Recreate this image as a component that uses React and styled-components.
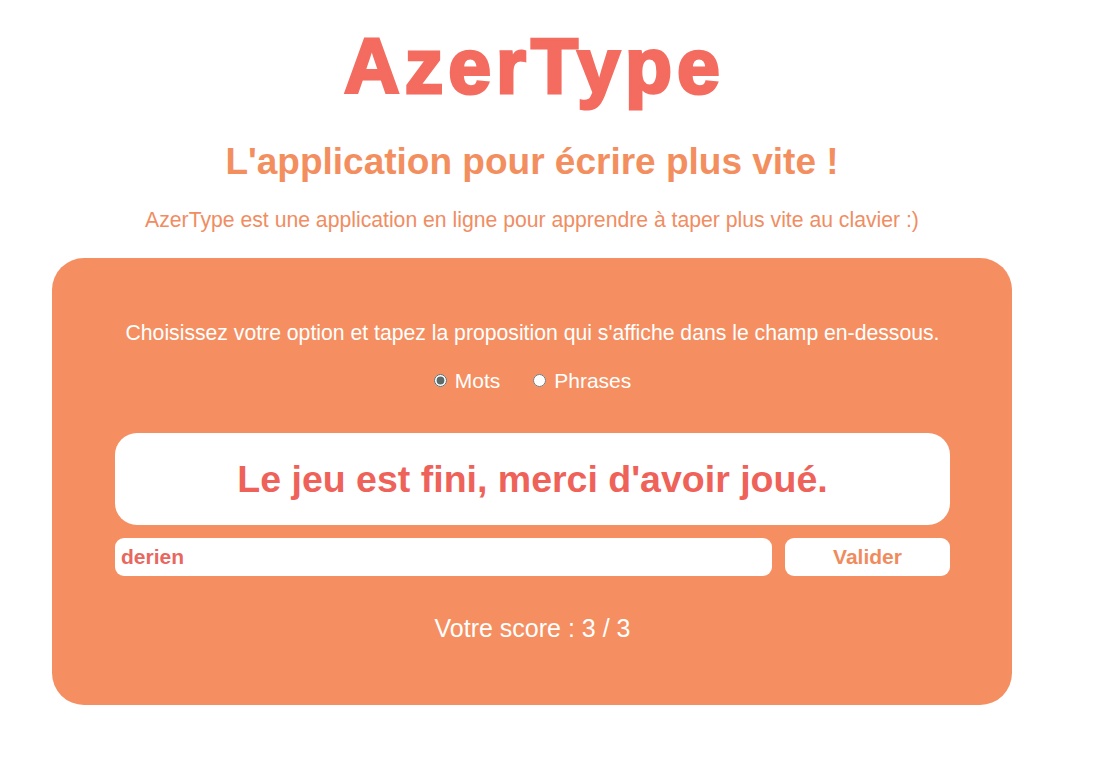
import React, { useState } from 'react';
import styled, { createGlobalStyle } from 'styled-components';

const GlobalStyle = createGlobalStyle`
    body {
        margin: 0;
        background: #fff;
        font-family: "Liberation Sans", Arial, sans-serif;
    }
`;

function App() {
    const [mode, setMode] = useState('mots');
    const [value, setValue] = useState('derien');

    return (
        <PageStyled>
            <GlobalStyle />
            <h1>AzerType</h1>
            <h2>L'application pour écrire plus vite !</h2>
            <p className="intro">AzerType est une application en ligne pour apprendre à taper plus vite au clavier :)</p>
            <Panel>
                <p>Choisissez votre option et tapez la proposition qui s'affiche dans le champ en-dessous.</p>
                <Options>
                    <label>
                        <input type="radio" name="mode" checked={mode === 'mots'} onChange={() => setMode('mots')} />
                        Mots
                    </label>
                    <label>
                        <input type="radio" name="mode" checked={mode === 'phrases'} onChange={() => setMode('phrases')} />
                        Phrases
                    </label>
                </Options>
                <Proposition>Le jeu est fini, merci d'avoir joué.</Proposition>
                <InputRow>
                    <input type="text" value={value} onChange={(e) => setValue(e.target.value)} />
                    <button>Valider</button>
                </InputRow>
                <Score>Votre score : 3 / 3</Score>
            </Panel>
        </PageStyled>
    )
}

const PageStyled = styled.div`
    width: 1064px;
    display: flex;
    flex-direction: column;
    align-items: center;
    padding-top: 28px;
    padding-bottom: 40px;
    h1 {
        margin: 0;
        padding-left: 5px;
        font-size: 77px;
        line-height: 1;
        font-weight: 900;
        color: #f46b5f;
        letter-spacing: 5px;
        -webkit-text-stroke: 3px #f46b5f;
    }
    h2 {
        margin: 36px 0 0;
        font-size: 37px;
        line-height: 1.15;
        color: #f38f5f;
    }
    .intro {
        margin: 23px 0 0;
        font-size: 21.2px;
        line-height: 1.2;
        color: #f08d63;
    }
`;

const Panel = styled.div`
    margin-top: 26px;
    width: 960px;
    box-sizing: border-box;
    background: #f58f61;
    border-radius: 32px;
    padding: 62px 62px 62px 63px;
    display: flex;
    flex-direction: column;
    align-items: center;
    color: #fff;
    p {
        margin: 0;
        font-size: 21.2px;
        line-height: 1.2;
    }
`;

const Options = styled.div`
    margin-top: 23px;
    height: 25px;
    display: flex;
    gap: 33px;
    font-size: 21px;
    label {
        display: flex;
        align-items: center;
        gap: 8px;
    }
    input {
        margin: 0;
        width: 13px;
        height: 13px;
        accent-color: #5d6a6a;
    }
`;

const Proposition = styled.div`
    margin-top: 40px;
    width: 100%;
    height: 92px;
    box-sizing: border-box;
    background: #fff;
    border-radius: 22px;
    display: flex;
    align-items: center;
    justify-content: center;
    font-size: 37.5px;
    font-weight: bold;
    color: #ee625a;
`;

const InputRow = styled.div`
    margin-top: 13px;
    width: 100%;
    display: flex;
    gap: 13px;
    input {
        flex: 1;
        height: 38px;
        box-sizing: border-box;
        border: none;
        outline: none;
        border-radius: 9px;
        padding: 0 6px;
        font-family: inherit;
        font-size: 21px;
        font-weight: bold;
        color: #e8675f;
        background: #fff;
    }
    button {
        width: 165px;
        height: 38px;
        border: none;
        border-radius: 9px;
        background: #fff;
        font-family: inherit;
        font-size: 21px;
        font-weight: bold;
        color: #f08b5e;
        cursor: pointer;
    }
`;

const Score = styled.div`
    margin-top: 37px;
    font-size: 25px;
    line-height: 30px;
`;

export default App;
